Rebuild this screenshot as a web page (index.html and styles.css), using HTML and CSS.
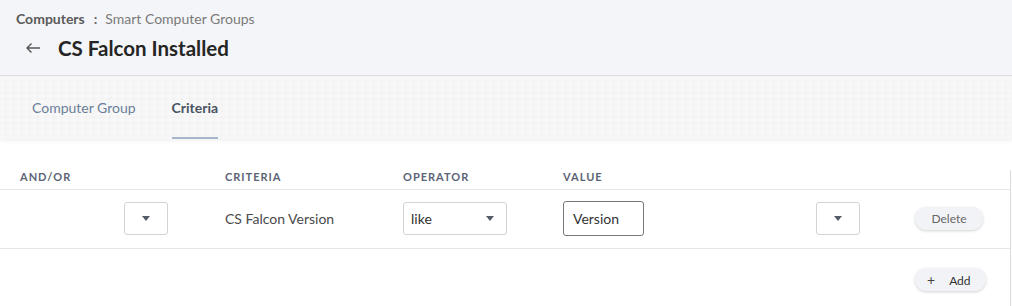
FILE: index.html
```html
<!DOCTYPE html>
<html>
<head>
<meta charset="utf-8">
<link rel="stylesheet" href="styles.css">
</head>
<body>
<div class="page">
  <header class="header">
    <div class="crumbs"><span class="crumb-root">Computers</span><span class="crumb-sep">:</span><span class="crumb-leaf">Smart Computer Groups</span></div>
    <div class="title-row">
      <svg class="back" width="16" height="12" viewBox="0 0 16 12"><path d="M15 6H2M6.5 1.5L2 6l4.5 4.5" fill="none" stroke="#555" stroke-width="1.4"/></svg>
      <h1 class="title">CS Falcon Installed</h1>
    </div>
  </header>
  <nav class="tabs">
    <div class="tab">Computer Group</div>
    <div class="tab active">Criteria</div>
  </nav>
  <main class="content">
    <div class="grid head">
      <div class="th">AND/OR</div>
      <div class="th">CRITERIA</div>
      <div class="th">OPERATOR</div>
      <div class="th">VALUE</div>
      <div></div>
      <div></div>
    </div>
    <div class="grid row">
      <div class="cell andor"><div class="select small"><span class="caret"></span></div></div>
      <div class="cell">CS Falcon Version</div>
      <div class="cell"><div class="select op"><span>like</span><span class="caret"></span></div></div>
      <div class="cell"><div class="input">Version</div></div>
      <div class="cell"><div class="select small"><span class="caret"></span></div></div>
      <div class="cell"><button class="pill">Delete</button></div>
    </div>
    <div class="footer">
      <button class="pill add"><span class="plus">+</span>Add</button>
    </div>
  </main>
</div>
</body>
</html>
```

FILE: styles.css
```css
* { box-sizing: border-box; }
html, body { margin: 0; padding: 0; }
body {
  width: 1012px;
  height: 306px;
  overflow: hidden;
  font-family: "Lato", "Open Sans", sans-serif;
  background: #fff;
  color: #333;
}
.page { height: 306px; overflow: hidden; }
.header {
  background: #f4f5f8;
  height: 76px;
  border-bottom: 1px solid #dcdde0;
  padding: 10px 0 0 16px;
}
.crumbs {
  font-size: 14px;
  line-height: 18px;
  color: #7a7a7a;
  display: flex;
  align-items: center;
}
.crumb-root { font-weight: 700; color: #5a5a5a; }
.crumb-sep { font-weight: 700; color: #666; margin: 0 8px 0 9px; }
.title-row {
  display: flex;
  align-items: center;
  margin-top: 8px;
  padding-left: 9px;
}
.back { margin-right: 17px; }
.title {
  margin: 0;
  font-size: 20.5px;
  font-weight: 700;
  color: #252525;
  line-height: 24px;
}
.tabs {
  height: 63px;
  background-color: #f6f6f6;
  background-image:
    radial-gradient(circle at 2px 2px, #fbfbfb 1px, transparent 1.5px),
    radial-gradient(circle at 6px 5px, #f0f0f0 1px, transparent 1.5px);
  background-size: 8px 6px;
  display: flex;
  padding-left: 32px;
  gap: 36px;
  box-shadow: 0 2px 4px rgba(0,0,0,0.06);
  position: relative;
}
.tab {
  font-size: 14px;
  color: #6b7f9a;
  padding-top: 23px;
  height: 63px;
  border-bottom: 2px solid transparent;
}
.tab.active {
  color: #4a5363;
  font-weight: 700;
  border-bottom-color: #a6b6cc;
}
.content {
  border-right: 1px solid #dadada;
  height: 166px;
  margin-right: 1px;
}
.grid {
  display: grid;
  grid-template-columns: 205px 178px 160px 253px 99px 1fr;
  padding-left: 20px;
}
.head {
  margin-top: 31px;
  height: 20px;
  border-bottom: 1px solid #e6e6e6;
}
.th {
  font-size: 11px;
  font-weight: 700;
  letter-spacing: 1px;
  color: #5b6475;
  line-height: 14px;
}
.row {
  height: 59px;
  border-bottom: 1px solid #e6e6e6;
  align-items: center;
  padding-bottom: 2px;
}
.cell {
  font-size: 14px;
  color: #4a4a4a;
  display: flex;
  align-items: center;
}
.andor { justify-content: flex-end; padding-right: 57px; }
.select {
  height: 33px;
  border: 1px solid #d3d3d3;
  border-radius: 3px;
  background: #fff;
  display: flex;
  align-items: center;
  justify-content: center;
}
.select.small { width: 44px; }
.select.op { width: 104px; justify-content: space-between; padding: 0 12px 0 7px; color: #333; }
.caret {
  width: 0; height: 0;
  border-left: 4px solid transparent;
  border-right: 4px solid transparent;
  border-top: 5px solid #555b66;
}
.input {
  width: 81px;
  height: 35px;
  border: 1px solid #777;
  border-radius: 3px;
  padding-left: 9px;
  display: flex;
  align-items: center;
  color: #333;
}
.pill {
  font-family: inherit;
  font-size: 12px;
  color: #666;
  background: #f2f3f7;
  border: none;
  border-radius: 12px;
  height: 23px;
  padding: 0 17px;
  box-shadow: 0 1px 3px rgba(0,0,0,0.18);
  cursor: pointer;
}
.cell .pill { width: 68px; padding: 0; }
.footer {
  display: flex;
  justify-content: flex-end;
  padding: 19px 24px 0 0;
}
.add { width: 71px; padding: 0 0 0 12px; text-align: left; color: #333; }
.plus { font-size: 14px; margin-right: 14px; color: #444; }
```
